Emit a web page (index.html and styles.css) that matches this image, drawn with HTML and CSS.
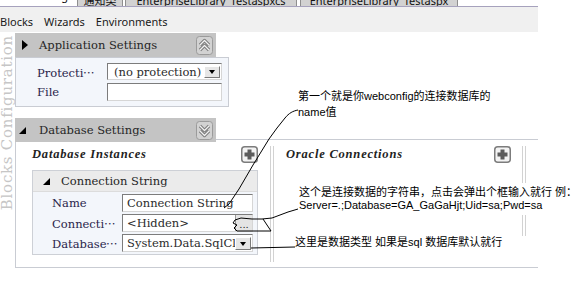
FILE: index.html
```html
<!DOCTYPE html>
<html lang="zh-CN">
<head>
  <meta charset="UTF-8" />
  <meta name="viewport" content="width=device-width, initial-scale=1.0"/>
  <title>Enterprise Library Configuration</title>
  <link rel="stylesheet" href="styles.css">
</head>
<body>
  <div class="tabs">
    <span class="tab tab-active">Setting</span>
    <span class="tab tab-1">通知类</span>
    <span class="tab tab-2">EnterpriseLibrary_Testaspxcs</span>
    <span class="tab tab-3">EnterpriseLibrary_Testaspx</span>
  </div>

  <div class="menubar">
    <span>Blocks</span>
    <span>Wizards</span>
    <span>Environments</span>
  </div>

  <div class="workspace">
    <div class="side"><span class="side-label">Blocks Configuration</span></div>

    <div class="main">
      <!-- Application Settings -->
      <div class="panel-head">
        <span class="caret"><i class="tri-right"></i></span>
        <span class="head-title">Application Settings</span>
        <svg class="fold-btn" width="17" height="19" viewBox="0 0 17 19">
          <rect x="0.5" y="0.5" width="16" height="18" rx="3" fill="#d2d2d2" stroke="#9b9b9b"/>
          <path d="M4 9 L8.5 4.5 L13 9 M4 14 L8.5 9.5 L13 14" fill="none" stroke="#7d7d7d" stroke-width="3.2" stroke-linejoin="round"/>
          <path d="M4 9 L8.5 4.5 L13 9 M4 14 L8.5 9.5 L13 14" fill="none" stroke="#f2f2f2" stroke-width="1.2" stroke-linejoin="round"/>
        </svg>
      </div>
      <div class="app-body">
        <div class="prop-row">
          <span class="prop-label">Protecti⋯</span>
          <span class="field field-select">(no protection)<span class="drop"><i class="tri-down"></i></span></span>
        </div>
        <div class="prop-row prop-row-tall">
          <span class="prop-label">File</span>
          <span class="field"></span>
        </div>
      </div>

      <!-- Database Settings -->
      <div class="panel-head panel-head-db">
        <span class="caret"><i class="tri-corner"></i></span>
        <span class="head-title">Database Settings</span>
        <svg class="fold-btn" width="17" height="19" viewBox="0 0 17 19">
          <rect x="0.5" y="0.5" width="16" height="18" rx="3" fill="#d2d2d2" stroke="#9b9b9b"/>
          <path d="M4 5 L8.5 9.5 L13 5 M4 10 L8.5 14.5 L13 10" fill="none" stroke="#7d7d7d" stroke-width="3.2" stroke-linejoin="round"/>
          <path d="M4 5 L8.5 9.5 L13 5 M4 10 L8.5 14.5 L13 10" fill="none" stroke="#f2f2f2" stroke-width="1.2" stroke-linejoin="round"/>
        </svg>
      </div>
      <div class="db-body">
        <div class="db-col db-col-1">
          <div class="col-head">
            <span class="col-title">Database Instances</span>
            <svg class="add-btn" width="17" height="17" viewBox="0 0 17 17">
              <rect x="0.75" y="0.75" width="15.5" height="15.5" rx="3" fill="#f3f3f3" stroke="#7c7c7c" stroke-width="1.5"/>
              <rect x="6.5" y="3.5" width="4" height="10" fill="#5c5c5c"/>
              <rect x="3.5" y="6.5" width="10" height="4" fill="#5c5c5c"/>
            </svg>
          </div>

          <div class="card">
            <div class="card-head">
              <i class="tri-corner"></i>
              <span class="head-title">Connection String</span>
            </div>
            <div class="card-body">
              <div class="card-row">
                <span class="card-label">Name</span>
                <span class="field">Connection String</span>
              </div>
              <div class="card-row">
                <span class="card-label">Connecti⋯</span>
                <span class="field">&lt;Hidden&gt;<span class="dots">...</span></span>
              </div>
              <div class="card-row">
                <span class="card-label">Database⋯</span>
                <span class="field field-select">System.Data.SqlCli<span class="drop"><i class="tri-down"></i></span></span>
              </div>
            </div>
          </div>
        </div>
        <div class="splitter splitter-1"></div>

        <div class="db-col db-col-2">
          <div class="col-head">
            <span class="col-title">Oracle Connections</span>
            <svg class="add-btn" width="17" height="17" viewBox="0 0 17 17">
              <rect x="0.75" y="0.75" width="15.5" height="15.5" rx="3" fill="#f3f3f3" stroke="#7c7c7c" stroke-width="1.5"/>
              <rect x="6.5" y="3.5" width="4" height="10" fill="#5c5c5c"/>
              <rect x="3.5" y="6.5" width="10" height="4" fill="#5c5c5c"/>
            </svg>
          </div>
        </div>
        <div class="splitter splitter-2"></div>
      </div>
    </div>
  </div>

  <!-- hand-drawn notes on top of the screenshot -->
  <div class="notes">
    <svg class="notes-lines" width="588" height="291" viewBox="0 0 588 291">
      <path d="M298,110 C293,111 289,113 285,118 L277,128 L269,139 L261,152 L253,165 L246,177 L239,189 L233,198 L229,204 L224,208" fill="none" stroke="#000" stroke-width="1"/>
      <path d="M298,209 L288,212 L280,215 L272,218 L262,219 L252,219 L241,218 L235,220 L233,223 L237,225 L234,228 L237,231 L253,231 L271,231 L267,225 L263,219" fill="none" stroke="#000" stroke-width="1"/>
      <path d="M251,248 L295,247" fill="none" stroke="#000" stroke-width="1"/>
    </svg>
    <div class="note note-1">第一个就是你webconfig的连接数据库的<br>name值</div>
    <div class="note note-2">这个是连接数据的字符串，点击会弹出个框输入就行 例：<br>Server=.;Database=GA_GaGaHjt;Uid=sa;Pwd=sa</div>
    <div class="note note-3">这里是数据类型 如果是sql 数据库默认就行</div>
  </div>
</body>
</html>
```

FILE: styles.css
```css
* {
  box-sizing: border-box;
}

body {
  margin: 0;
  width: 588px;
  height: 291px;
  overflow: hidden;
  position: relative;
  background: #fff;
  font-family: "DejaVu Serif", serif;
  font-size: 11.5px;
  color: #222;
}

/* top tab strip, only the bottom edge shows */
.tabs {
  height: 6px;
  overflow: hidden;
  display: flex;
  align-items: flex-end;
  font-family: "Noto Sans", "Noto Sans CJK SC", sans-serif;
  font-size: 11px;
  color: #111;
}

.tab {
  flex: none;
  height: 13px;
  line-height: 14px;
  margin-left: 2px;
  text-align: center;
  white-space: nowrap;
  overflow: hidden;
  background: #d2d2d2;
  border: 1px solid #8f8f8f;
  border-bottom: 0;
}

.tab-active {
  width: 75px;
  height: 17px;
  margin-left: 0;
  padding-right: 7px;
  text-align: right;
  background: none;
  border: 0;
}

.tab-1 { width: 46px; }
.tab-2 { width: 172px; }
.tab-3 { width: 158px; margin-left: 3px; }

.menubar {
  width: 538px;
  height: 26px;
  padding-top: 4px;
  display: flex;
  border-top: 1px solid #a6a2bd;
  background: #f0f0f0;
  font-family: "Noto Sans", sans-serif;
  font-size: 11px;
  line-height: 21px;
  color: #1a1a1a;
}

.menubar span {
  margin-right: 11px;
}

.workspace {
  width: 538px;
  height: 259px;
  display: flex;
  overflow: hidden;
}

.side {
  width: 15px;
  flex: none;
  padding-top: 3px;
}

.side-label {
  display: block;
  writing-mode: vertical-rl;
  transform: rotate(180deg);
  font-size: 15px;
  line-height: 14px;
  letter-spacing: 0.75px;
  color: #c6c6c6;
  white-space: nowrap;
}

.main {
  flex: 1;
  padding-top: 1px;
}

/* section headers */
.panel-head {
  width: 201px;
  height: 24px;
  display: flex;
  align-items: center;
  background: #c4c4c4;
  padding-right: 3px;
}

.panel-head-db {
  margin-top: 11px;
  margin-bottom: -3px;
  position: relative;
  z-index: 1;
}

.caret {
  width: 24px;
  flex: none;
  display: flex;
  align-items: center;
}

.head-title {
  flex: 1;
  color: #262626;
}

.fold-btn {
  flex: none;
  display: block;
}

.tri-right {
  display: block;
  margin-left: 7px;
  width: 0;
  height: 0;
  border-left: 6px solid #000;
  border-top: 5px solid transparent;
  border-bottom: 5px solid transparent;
}

.tri-corner {
  display: block;
  margin-left: 4px;
  width: 0;
  height: 0;
  border-bottom: 7px solid #000;
  border-left: 7px solid transparent;
}

.tri-down {
  display: block;
  width: 0;
  height: 0;
  border-top: 4px solid #000;
  border-left: 3px solid transparent;
  border-right: 3px solid transparent;
}

/* application settings body */
.app-body {
  width: 214px;
  height: 50px;
  padding: 5px 6px 0 21px;
  border: 1px solid #c9ccd3;
  background: #f3f6fb;
}

.prop-row {
  height: 17px;
  display: flex;
  align-items: center;
}

.prop-row-tall {
  height: 18px;
  margin-top: 3px;
}

.prop-label {
  width: 70px;
  flex: none;
  color: #2a244a;
}

.field {
  flex: 1;
  height: 100%;
  position: relative;
  display: flex;
  align-items: center;
  padding-left: 4px;
  white-space: nowrap;
  overflow: hidden;
  background: #fff;
  border: 1px solid;
  border-color: #7c7c7c #d6d6d6 #d6d6d6 #7c7c7c;
  color: #2b2b2b;
}

.prop-row .field-select {
  padding-left: 6px;
}

.drop {
  position: absolute;
  right: 1px;
  top: 2px;
  bottom: 1px;
  width: 16px;
  display: flex;
  align-items: center;
  justify-content: center;
  background: #e6e6e6;
  border: 1px solid;
  border-color: #fff #7a7a7a #7a7a7a #fff;
}

.dots {
  position: absolute;
  right: 0;
  top: 0;
  bottom: 0;
  width: 17px;
  line-height: 20px;
  text-align: center;
  font-size: 10px;
  background: #e4e4e4;
  border-left: 1px solid #9a9a9a;
}

/* database settings body */
.db-body {
  width: 545px;
  height: 129px;
  padding-top: 6px;
  display: flex;
  align-items: flex-start;
  border: 1px solid #c9ccd3;
  background: #fff;
}

.db-col-1 {
  width: 254px;
  padding: 0 12px 0 16px;
}

.db-col-2 {
  width: 248px;
  padding: 0 11px 0 12px;
}

.col-head {
  height: 17px;
  display: flex;
  align-items: center;
  justify-content: space-between;
}

.col-title {
  font-family: "Liberation Serif", serif;
  font-style: italic;
  font-weight: bold;
  font-size: 12.5px;
  letter-spacing: 0.8px;
  color: #222;
}

.add-btn {
  display: block;
}

.splitter {
  width: 4px;
  flex: none;
  border-left: 1px solid #d2d2d2;
  border-right: 1px solid #d2d2d2;
}

.splitter-1 { height: 116px; }
.splitter-2 { height: 90px; }

.card {
  margin-top: 7px;
  width: 226px;
  border: 1px solid #cdd0d6;
  background: #f3f6fb;
}

.card-head {
  height: 21px;
  display: flex;
  align-items: center;
  gap: 11px;
  padding-left: 10px;
  background: #ebebeb;
  border-bottom: 1px solid #dcdcdc;
}

.card-head .tri-corner {
  margin-left: 0;
}

.card-body {
  padding: 2px 4px 2px 19px;
}

.card-row {
  height: 18px;
  margin-bottom: 2px;
  display: flex;
  align-items: center;
}

.card-row:last-child {
  margin-bottom: 0;
}

.card-label {
  width: 70px;
  flex: none;
  color: #2a244a;
}

/* notes drawn over the window */
.notes {
  position: absolute;
  left: 0;
  top: 0;
  width: 588px;
  height: 291px;
  pointer-events: none;
}

.notes-lines {
  position: absolute;
  left: 0;
  top: 0;
}

.note {
  position: absolute;
  font-family: "Liberation Sans", "Noto Sans CJK SC", sans-serif;
  font-size: 11px;
  color: #000;
  white-space: nowrap;
}

.note-1 {
  left: 298px;
  top: 88px;
  line-height: 16px;
}

.note-2 {
  left: 299px;
  top: 183px;
  padding: 3px 0;
  line-height: 13px;
  background: #fff;
}

.note-3 {
  left: 295px;
  top: 236px;
  line-height: 13px;
  background: #fff;
}
```
